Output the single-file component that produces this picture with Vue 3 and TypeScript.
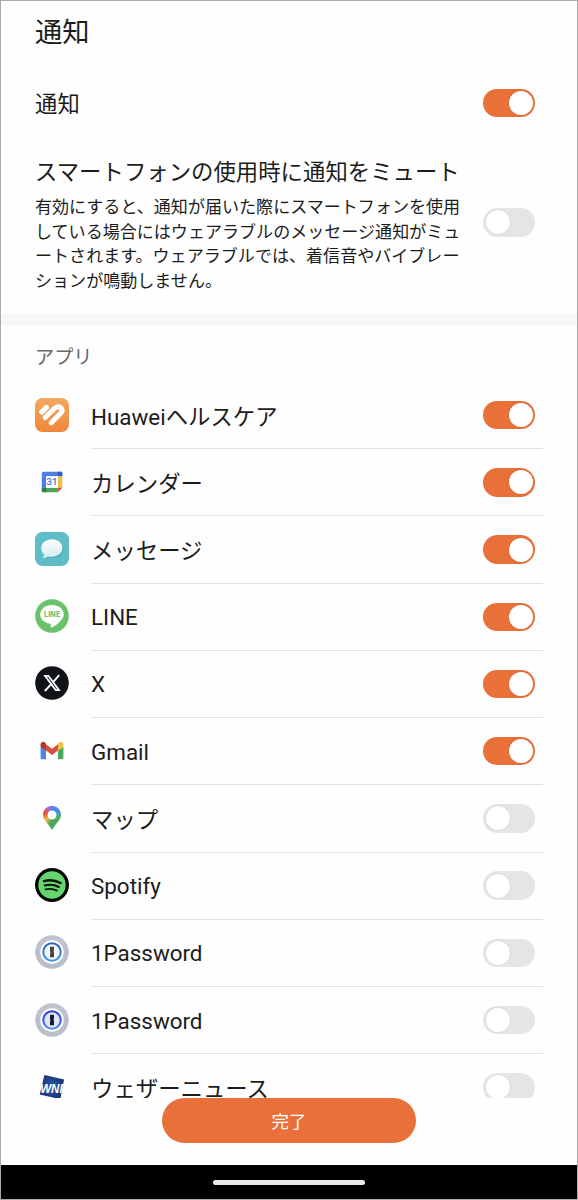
<script setup lang="ts">
import { ref } from 'vue'

interface AppItem {
  id: string
  name: string
  on: boolean
  latin?: boolean
}

const notify = ref(true)
const mute = ref(false)
const apps = ref<AppItem[]>([
  { id: 'health', name: 'Huaweiヘルスケア', on: true },
  { id: 'calendar', name: 'カレンダー', on: true },
  { id: 'messages', name: 'メッセージ', on: true },
  { id: 'line', name: 'LINE', on: true, latin: true },
  { id: 'x', name: 'X', on: true, latin: true },
  { id: 'gmail', name: 'Gmail', on: true, latin: true },
  { id: 'maps', name: 'マップ', on: false },
  { id: 'spotify', name: 'Spotify', on: false, latin: true },
  { id: 'op-light', name: '1Password', on: false, latin: true },
  { id: 'op-dark', name: '1Password', on: false, latin: true },
  { id: 'weather', name: 'ウェザーニュース', on: false },
])
</script>

<template>
  <div class="screen" lang="ja">
    <main class="content">
      <h1 class="title">通知</h1>
      <div class="setting">
        <span class="label">通知</span>
        <button class="toggle" :class="{ on: notify }" role="switch" :aria-checked="notify" @click="notify = !notify"><i class="knob"></i></button>
      </div>
      <div class="setting mute">
        <div class="copy">
          <div class="label">スマートフォンの使用時に通知をミュート</div>
          <p class="description">有効にすると、通知が届いた際にスマートフォンを使用<br>している場合にはウェアラブルのメッセージ通知がミュ<br>ートされます。ウェアラブルでは、着信音やバイブレー<br>ションが鳴動しません。</p>
        </div>
        <button class="toggle" :class="{ on: mute }" role="switch" :aria-checked="mute" @click="mute = !mute"><i class="knob"></i></button>
      </div>
      <div class="band"></div>
      <h2 class="section">アプリ</h2>
      <ul class="apps">
        <li v-for="app in apps" :key="app.id" class="app">
          <svg class="icon" viewBox="0 0 34 34">
            <g v-if="app.id === 'health'">
              <defs><linearGradient id="health-bg" x1="0" y1="0" x2="0" y2="1"><stop stop-color="#f3aa61" /><stop offset="1" stop-color="#ee873a" /></linearGradient></defs>
              <rect width="34" height="34" rx="7.5" fill="url(#health-bg)" />
              <path d="M6.9 13.9 11.3 9.6" fill="none" stroke="#fff" stroke-width="5.4" stroke-linecap="round" />
              <path d="M10.2 19.6 19.4 10.4Q23.2 7.4 26 9.8 28.2 12.4 25.6 15.2L16.2 24.8" fill="none" stroke="#fff" stroke-width="5" stroke-linecap="round" stroke-linejoin="round" />
            </g>
            <g v-else-if="app.id === 'calendar'">
              <path d="M8.5 6.8H26Q27.3 6.8 27.3 8.1V11.3H11.3V22.8H6.8V8.5Q6.8 6.8 8.5 6.8Z" fill="#4d7de6" />
              <path d="M22.8 6.8H25.8Q27.3 6.8 27.3 8.3V11.3H22.8Z" fill="#315fc5" />
              <path d="M22.8 11.3H27.3V22.8H22.8Z" fill="#f1bf42" />
              <path d="M11.3 22.8H22.8V27.3H8.3Q6.8 27.3 6.8 25.8V22.8Z" fill="#4da35a" />
              <path d="M6.8 22.8H11.3V27.3H8.3Q6.8 27.3 6.8 25.8Z" fill="#357e43" />
              <path d="M22.8 22.8H27.3L22.8 27.3Z" fill="#d95040" />
              <path d="M11.3 11.3H22.8V22.8H11.3Z" fill="#fff" />
              <text x="17" y="20.3" class="calendar-day">31</text>
            </g>
            <g v-else-if="app.id === 'messages'">
              <defs><linearGradient id="bubble" x1="0" y1="0" x2="0" y2="1"><stop stop-color="#fff" /><stop offset="1" stop-color="#d0eced" /></linearGradient></defs>
              <rect width="34" height="34" rx="7.5" fill="#5ebdc7" />
              <path d="M18 8.3C11.8 8.3 7 12 7 17.1C7 20.1 8.4 22.3 10.2 23.7Q10 25.5 7.8 26.8Q11.5 27.6 13.8 25.3C22 27.3 28.2 23 28.2 17.1C28.2 12 24 8.3 18 8.3Z" fill="#419ca8" opacity=".6" />
              <path d="M17 7.3C10.8 7.3 6.2 11 6.2 16.1C6.2 19.1 7.5 21.3 9.4 22.7Q9.2 24.7 7.2 26Q10.7 26.7 13 24.5C21 26.2 27.4 22 27.4 16.1C27.4 11 23 7.3 17 7.3Z" fill="url(#bubble)" />
            </g>
            <g v-else-if="app.id === 'line'">
              <circle cx="17" cy="17" r="16.8" fill="#6bc26c" />
              <path d="M17 6C10.4 6 5.2 10.2 5.2 15.5C5.2 20.1 9.4 23.7 14.5 24.6Q16.2 25 15.8 28Q15.7 29.2 17 28.5C20.6 26.5 28.8 20.9 28.8 15.5C28.8 10.2 23.6 6 17 6Z" fill="#fff" />
              <text x="9" y="18.3" class="line-name" textLength="16.2" lengthAdjust="spacing">LINE</text>
            </g>
            <g v-else-if="app.id === 'x'">
              <circle cx="17" cy="17" r="16.8" fill="#101419" />
              <path d="M10.1 9.8H13.4L24 24.1H20.7Z" fill="none" stroke="#fff" stroke-width="1.8" />
              <path d="M24.2 9.2 18.3 15.9M15.8 18.7 9.8 25" stroke="#fff" stroke-width="1.9" />
            </g>
            <g v-else-if="app.id === 'gmail'">
              <path d="M5.6 12.5 11 16.5V25.3H7.2Q5.6 25.3 5.6 23.7Z" fill="#4d82e8" />
              <path d="M28.4 12.5 23 16.5V25.3H26.8Q28.4 25.3 28.4 23.7Z" fill="#4da65b" />
              <path d="M11 10.2 17 14.7 23 10.2V16.5L17 21 11 16.5Z" fill="#d95040" />
              <path d="M5.6 13V10.5C5.6 8 8.3 7.1 10 8.6L11 9.6V16.6Z" fill="#b8372b" />
              <path d="M28.4 13V10.5C28.4 8 25.7 7.1 24 8.6L23 9.6V16.6Z" fill="#f1bf42" />
            </g>
            <g v-else-if="app.id === 'maps'">
              <foreignObject x="7" y="4.5" width="20" height="25"><div class="pin"></div></foreignObject>
              <circle cx="17" cy="14" r="4.5" fill="#fff" />
            </g>
            <g v-else-if="app.id === 'spotify'">
              <circle cx="17" cy="17" r="17" fill="#030604" />
              <circle cx="17" cy="17" r="13.7" fill="#65d46e" />
              <g fill="none" stroke="#07120a" stroke-linecap="round">
                <path d="M9 13.2Q17.5 10.8 25.6 15" stroke-width="2.4" />
                <path d="M9.8 17.5Q17.4 15.5 23.7 19" stroke-width="2.1" />
                <path d="M10.5 21.4Q17 19.9 21.9 22.6" stroke-width="1.8" />
              </g>
            </g>
            <g v-else-if="app.id === 'op-light' || app.id === 'op-dark'">
              <defs>
                <linearGradient id="case" x1="0" y1="0" x2="0" y2="1"><stop stop-color="#c0c3d1" /><stop offset="1" stop-color="#b8bccb" /></linearGradient>
                <linearGradient id="ring-light" x1="0" y1="0" x2="0" y2="1"><stop stop-color="#2b66bd" /><stop offset="1" stop-color="#409bed" /></linearGradient>
                <linearGradient id="ring-dark" x1="0" y1="0" x2="0" y2="1"><stop stop-color="#223bd8" /><stop offset="1" stop-color="#548cf0" /></linearGradient>
              </defs>
              <circle cx="17" cy="17" r="16.8" fill="url(#case)" />
              <path d="M0 17H34" stroke="#a8acba" stroke-width=".5" />
              <circle cx="17" cy="17" r="11.8" fill="#fff" />
              <circle cx="17" cy="17" r="8.7" :fill="app.id === 'op-light' ? '#f6f6f6' : '#e3e4f5'" :stroke="app.id === 'op-light' ? 'url(#ring-light)' : 'url(#ring-dark)'" stroke-width="2.1" />
              <path d="M15.5 11.7H18.5Q19 11.7 19 12.2V16L18.2 16.8 19 17.6V21.8Q19 22.3 18.5 22.3H15.5Q15 22.3 15 21.8V18L15.8 17.2 15 16.4V12.2Q15 11.7 15.5 11.7Z" :fill="app.id === 'op-light' ? '#414448' : '#141a30'" />
            </g>
            <g v-else>
              <defs><radialGradient id="wni"><stop stop-color="#3262ad" /><stop offset="1" stop-color="#183475" /></radialGradient></defs>
              <path d="M9.4 5.1 29 9.4 25.3 29.3 4.8 24.4Z" fill="url(#wni)" />
              <text x="5.2" y="23" class="wni-name" textLength="22.5" lengthAdjust="spacingAndGlyphs">WNI</text>
            </g>
          </svg>
          <div class="entry">
            <span class="label" :class="{ latin: app.latin }">{{ app.name }}</span>
            <button class="toggle" :class="{ on: app.on }" role="switch" :aria-checked="app.on" @click="app.on = !app.on"><i class="knob"></i></button>
          </div>
        </li>
      </ul>
    </main>
    <footer class="footer"><button class="done">完了</button></footer>
    <nav class="navbar"><div class="handle"></div></nav>
  </div>
</template>

<style>
body { margin: 0; }
</style>

<style scoped>
.screen {
  box-sizing: border-box;
  width: 578px;
  height: 1200px;
  border: 1px solid #aaa;
  background: #fefefe;
  color: #1c1c1c;
  font-family: Roboto, "Noto Sans CJK JP", sans-serif;
  display: flex;
  flex-direction: column;
  overflow: hidden;
}
.content { height: 1097px; flex: none; overflow: hidden; }
.title { margin: 0; height: 62px; padding-left: 34px; font-size: 27.3px; font-weight: 400; line-height: 64px; }
.setting { display: flex; align-items: center; justify-content: space-between; height: 80px; padding: 0 42px 0 34px; }
.label { font-size: 22.4px; line-height: 34px; white-space: nowrap; }
.setting > .label { padding-top: 2px; }
.setting.mute { height: 171px; align-items: flex-start; }
.mute .copy { padding-top: 12px; }
.mute .toggle { margin-top: 65px; }
.description { margin: 6px 0 0; font-size: 17.06px; line-height: 24.6px; white-space: nowrap; }
.toggle { width: 52px; height: 28.5px; flex: none; display: flex; align-items: center; box-sizing: border-box; padding: 0 2.5px; border: 0; border-radius: 15px; background: #e5e5e5; }
.toggle.on { justify-content: flex-end; background: #e97039; }
.knob { width: 24px; height: 24px; border-radius: 50%; background: #fff; box-shadow: 0 0 2px rgba(0, 0, 0, .12); }
.band { height: 11px; background: #f6f6f6; }
.section { margin: 0; height: 57px; padding-left: 34px; font-size: 19.2px; font-weight: 400; line-height: 65px; color: #686868; }
.apps { margin: 0; padding: 0; list-style: none; }
.app { display: flex; align-items: center; height: 67.23px; padding: 0 34px; }
.icon { width: 34px; height: 34px; flex: none; margin: 0 22px 2px 0; }
.entry { flex: 1; align-self: stretch; display: flex; align-items: center; justify-content: space-between; padding-right: 8px; border-bottom: 1px solid #e1e1e1; }
.entry .label { padding-top: 3px; }
.entry .label.latin { padding-top: 1px; }
.calendar-day { font: 500 9.6px Roboto, sans-serif; text-anchor: middle; fill: #4374cf; }
.line-name { font: 800 7px Inter, sans-serif; fill: #6bc26c; }
.wni-name { font: italic 700 12px "Liberation Sans", sans-serif; fill: #fff; }
.pin { width: 20px; height: 25px; clip-path: path('M10 .4C4.8 .4 1 4.4 1 9.2C1 14 5.2 17 7.7 21L9.4 23.7Q10 24.6 10.6 23.7L12.3 21C14.8 17 19 14 19 9.2C19 4.4 15.2 .4 10 .4Z'); background: conic-gradient(from 0deg at 10px 9.4px, #5c81ee, #4590e7 50deg, #4aa982 95deg, #4eae5c 120deg, #4ba65c 190deg, #f0bd47 235deg, #e85b42 280deg, #dc5854 305deg, #9874dd 335deg, #5c81ee); }
.footer { flex: none; height: 67px; display: flex; justify-content: center; align-items: flex-start; }
.done { width: 254px; height: 45px; border: 0; border-radius: 23px; padding: 2px 0 0; background: #e97039; color: #fff; font: 400 17.5px/30px Roboto, "Noto Sans CJK JP", sans-serif; }
.navbar { flex: 1; display: flex; justify-content: center; align-items: center; background: #000; }
.handle { width: 152px; height: 5px; border-radius: 3px; background: #eaeaea; }
</style>
